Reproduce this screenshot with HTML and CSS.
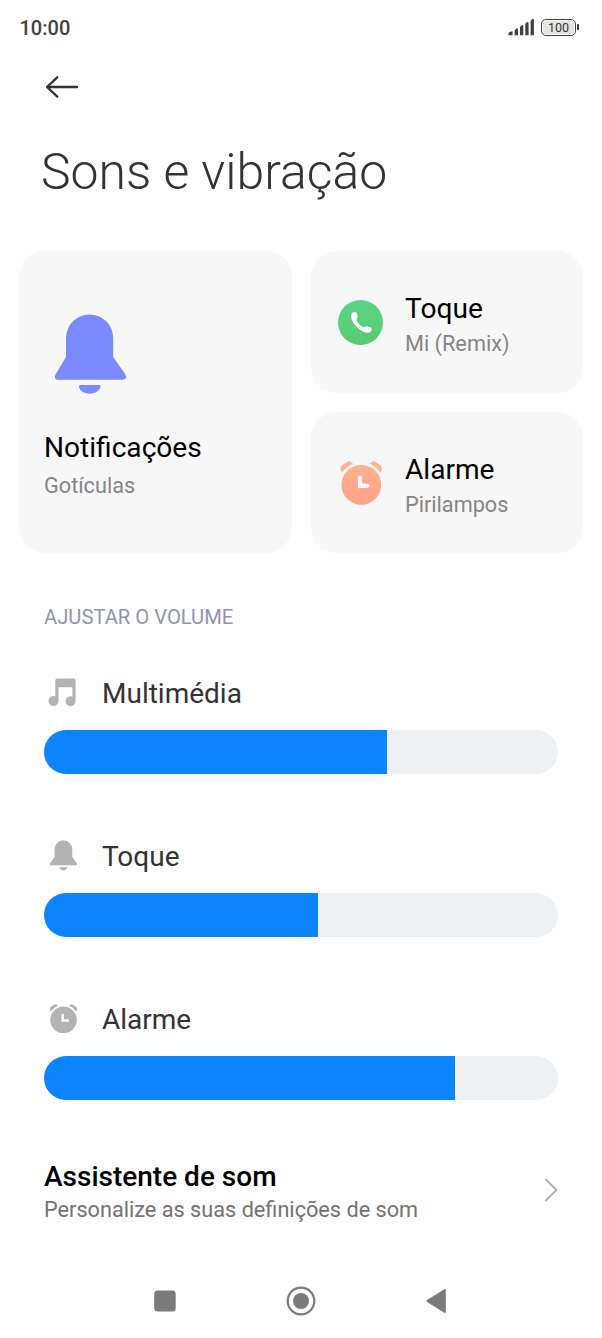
FILE: index.html
```html
<!DOCTYPE html>
<html lang="pt">
<head>
<meta charset="utf-8">
<title>Sons e vibração</title>
<link rel="stylesheet" href="styles.css">
</head>
<body>
<div class="screen">
  <div class="status-bar">
    <span class="clock">10:00</span>
    <div class="status-icons">
      <svg width="27" height="18" viewBox="0 0 27 18" fill="#414141">
        <path d="M.5 16.300V14.800Q.5 14 1.700 13T4.600 12.600V16.300ZM6.700 16.300V11.600Q6.700 10.600 8.200 9.700T10 10.300V16.300ZM12 16.300V8.300Q12 7.300 13.500 6.400T15.300 7V16.300ZM17.300 16.300V5.200Q17.300 4.200 18.800 3.300T20.600 3.900V16.300ZM22.600 16.300V2.200Q22.600 1.200 24.100.3T25.900.9V16.300Z"/>
      </svg>
      <div class="battery"><div class="battery-body"><span class="battery-level">100</span></div><i class="battery-tip"></i></div>
    </div>
  </div>

  <header class="header">
    <svg class="back" width="36" height="26" viewBox="0 0 36 26" fill="none" stroke="#333" stroke-width="2.3" stroke-linecap="round" stroke-linejoin="round">
      <path d="M13.300 3.300 3 13l10.300 9.700M3 13h30"/>
    </svg>
    <h1 class="title">Sons e vibração</h1>
  </header>

  <section class="cards">
    <article class="card card-large">
      <svg class="bell" width="73" height="80" viewBox="0 0 73 80" fill="#7b8bff">
        <path d="M12 24a23.600 23.600 0 0 1 47.200 0V43L71.500 60.500Q73.500 65.500 69 65.700H4Q-.3 65.500 1.500 60.500L12 43Z"/>
        <path d="M26 71H45.500Q46.700 71 46.500 72.600C46 76.500 41.500 79.700 35.700 79.700S25.400 76.500 24.900 72.600Q24.700 71 26 71Z"/>
      </svg>
      <div class="card-title">Notificações</div>
      <div class="card-sub">Gotículas</div>
    </article>
    <article class="card card-small">
      <svg class="card-icon" width="46" height="46" viewBox="-.5 -.5 46 46">
        <defs><linearGradient id="green" x2="0" y2="1"><stop stop-color="#5bd584"/><stop offset="1" stop-color="#56ca72"/></linearGradient></defs>
        <circle cx="23" cy="23" r="22.500" fill="url(#green)"/>
        <path fill="#fff" d="M15.300 13.100Q17.300 11.800 19 13L20.200 17.100Q20.400 18.700 18.900 19.700C19.600 23.100 22.500 26.300 26.200 27.900Q27.400 26.300 29 26.800L33.300 28.100Q35 28.900 34 30.900C32.500 33.900 28.700 34 24.500 31.500C19 28.200 14.800 22.500 13.600 18Q13 14.700 15.300 13.100Z"/>
      </svg>
      <div>
        <div class="card-title">Toque</div>
        <div class="card-sub">Mi (Remix)</div>
      </div>
    </article>
    <article class="card card-small">
      <svg class="card-icon" width="46" height="46" viewBox="-.9 -.3 46 46">
        <defs><linearGradient id="orange" x2="0" y2="1"><stop stop-color="#ffb18d"/><stop offset="1" stop-color="#ffa187"/></linearGradient></defs>
        <circle cx="23.400" cy="24.500" r="19.900" fill="url(#orange)"/>
        <path fill="#ffb18d" d="M4.200 12.300 2.700 9.400Q2 7.800 3.300 6.300Q6.500 2.500 10.500 1.100Q11.800.7 12.800 1.600L15.100 3.500Q8.500 6.200 4.200 12.300ZM42.600 12.300 44.100 9.400Q44.800 7.800 43.500 6.300Q40.300 2.500 36.300 1.100Q35 .7 34 1.600L31.700 3.500Q38.300 6.200 42.600 12.300Z"/>
        <path fill="none" stroke="#fff" stroke-width="4" stroke-linecap="round" d="M22.100 17.300V25.500H29.700"/>
        <path fill="#fff" d="M20.100 19.500H24.100V23.500H28V27.500H20.100Z"/>
      </svg>
      <div>
        <div class="card-title">Alarme</div>
        <div class="card-sub">Pirilampos</div>
      </div>
    </article>
  </section>

  <h2 class="section-label">AJUSTAR O VOLUME</h2>

  <section class="volumes">
    <div class="volume">
      <div class="volume-head">
        <svg width="38" height="36" viewBox="0 0 38 36" fill="#b3b3b3">
          <path d="M11.300 4.500Q11.300 2.500 13.300 2.500H29.600Q31.600 2.500 31.600 4.500V25A5 5 0 1 1 28.400 20.500V11.200H14.500V25A5 5 0 1 1 11.300 20.300Z"/>
        </svg>
        <span>Multimédia</span>
      </div>
      <div class="track"><div class="fill" style="width:66.700%"></div></div>
    </div>
    <div class="volume">
      <div class="volume-head">
        <svg width="38" height="36" viewBox="0 0 38 36" fill="#b3b3b3">
          <path d="M10.500 10.200A8.900 8.900 0 0 1 28.300 10.200V18L32.600 24Q33.600 26.300 31.800 26.300H7Q5.200 26.300 6.200 24L10.500 18Z"/>
          <path d="M15.400 28.200H23.400C22.900 30.400 21.400 31.300 19.400 31.300S15.900 30.400 15.400 28.200Z"/>
        </svg>
        <span>Toque</span>
      </div>
      <div class="track"><div class="fill" style="width:53.400%"></div></div>
    </div>
    <div class="volume">
      <div class="volume-head">
        <svg width="38" height="36" viewBox="0 0 38 36" fill="#b3b3b3">
          <circle cx="19.500" cy="17.800" r="13.300"/>
          <path d="M7 9.500 5.900 7.400Q5.600 6.500 6.400 5.500Q8.500 3.200 11.200 2.300Q12 2.100 12.700 2.700L14 3.800Q9.900 5.500 7 9.500ZM32 9.500 33.100 7.400Q33.400 6.500 32.600 5.500Q30.500 3.200 27.800 2.300Q27 2.100 26.300 2.700L25 3.800Q29.100 5.500 32 9.500Z"/>
          <path d="M18.700 13V18.600H24" fill="none" stroke="#fff" stroke-width="2.500" stroke-linecap="round"/>
        </svg>
        <span>Alarme</span>
      </div>
      <div class="track"><div class="fill" style="width:80.050%"></div></div>
    </div>
  </section>

  <section class="assistant">
    <div>
      <div class="assistant-title">Assistente de som</div>
      <div class="assistant-sub">Personalize as suas definições de som</div>
    </div>
    <svg width="14" height="24" viewBox="0 0 14 24" fill="none" stroke="#b0b0b0" stroke-width="1.800" stroke-linecap="round" stroke-linejoin="round"><path d="M1.800 1.500 12.500 12 1.800 22.500"/></svg>
  </section>

  <nav class="nav">
    <svg width="30" height="30" viewBox="0 0 30 30"><rect x="4.200" y="4.500" width="21.500" height="21" rx="3.500" fill="#7b7b7b"/></svg>
    <svg width="30" height="30" viewBox="0 0 30 30"><circle cx="15" cy="15" r="13.300" fill="none" stroke="#7b7b7b" stroke-width="2.200"/><circle cx="15" cy="15" r="8" fill="#7b7b7b"/></svg>
    <svg width="30" height="30" viewBox="0 0 30 30"><path d="M5.300 15 22.800 4V26Z" fill="#7b7b7b" stroke="#7b7b7b" stroke-width="2" stroke-linejoin="round"/></svg>
  </nav>
</div>
</body>
</html>
```

FILE: styles.css
```css
* { box-sizing: border-box; }
body { margin: 0; background: #fefefe; font-family: Roboto, sans-serif; color: #333; }
svg { display: block; flex: none; }
.screen { width: 602px; height: 1338px; overflow: hidden; display: flex; flex-direction: column; }

.status-bar { height: 56px; flex: none; padding: 0 23px 0 19.500px; display: flex; align-items: center; justify-content: space-between; }
.clock { font-size: 20px; font-weight: 500; color: #414141; }
.status-icons { display: flex; align-items: center; gap: 6px; }
.battery { display: flex; align-items: center; gap: 1px; margin-top: -2px; }
.battery-body { width: 35px; height: 17px; border: 1.500px solid #414141; border-radius: 5px; padding: 1px; display: flex; }
.battery-level { flex: 1; background: #e4e4e4; border-radius: 3px; font-size: 12.500px; line-height: 14px; font-weight: 400; text-align: center; color: #333; }
.battery-tip { width: 2px; height: 6px; background: #414141; border-radius: 0 1px 1px 0; }

.header { height: 195px; flex: none; padding: 18px 41px 0; }
.back { margin-left: 3px; }
.title { margin: 42px 0 0; font-size: 49.900px; line-height: 60px; font-weight: 300; }

.cards { flex: none; margin: 0 19px; display: grid; grid-template-columns: 1fr 1fr; grid-template-rows: 141.500px 141.500px; gap: 19px; }
.card { background: #f7f7f7; border-radius: 26px; }
.card-large { grid-row: span 2; padding: 63px 25px 0; }
.bell { margin: 0 0 36px 10px; }
.card-title { font-size: 28.100px; line-height: 36px; color: #000; }
.card-sub { font-size: 21.700px; line-height: 28px; color: #858585; }
.card-large .card-sub { margin-top: 6px; }
.card-small { display: flex; gap: 22px; padding: 40px 26px 0 26.500px; }
.card-small .card-icon { margin-top: 8px; }
.card-small .card-sub { margin-top: 3px; }

.section-label { flex: none; margin: 52px 44px 0; font-size: 20.200px; line-height: 24px; font-weight: 400; color: #9193b3; }

.volumes { flex: none; margin: 47px 44px 0; display: flex; flex-direction: column; gap: 65px; }
.volume-head { height: 36px; display: flex; gap: 20px; font-size: 28px; line-height: 36px; margin-bottom: 18px; }
.track { height: 44px; border-radius: 22px; background: #edf1f4; overflow: hidden; }
.fill { height: 100%; background: #0d84ff; }

.assistant { flex: none; height: 66px; margin: 58px 44px 0; display: flex; justify-content: space-between; }
.assistant svg { margin-top: 20px; }
.assistant-title { margin-top: 1px; font-size: 28px; line-height: 36px; font-weight: 500; color: #000; }
.assistant-sub { margin-top: -1px; font-size: 21.700px; line-height: 32px; color: #737373; }

.nav { flex: none; margin: 62px 150px 0; display: flex; justify-content: space-between; }
```
